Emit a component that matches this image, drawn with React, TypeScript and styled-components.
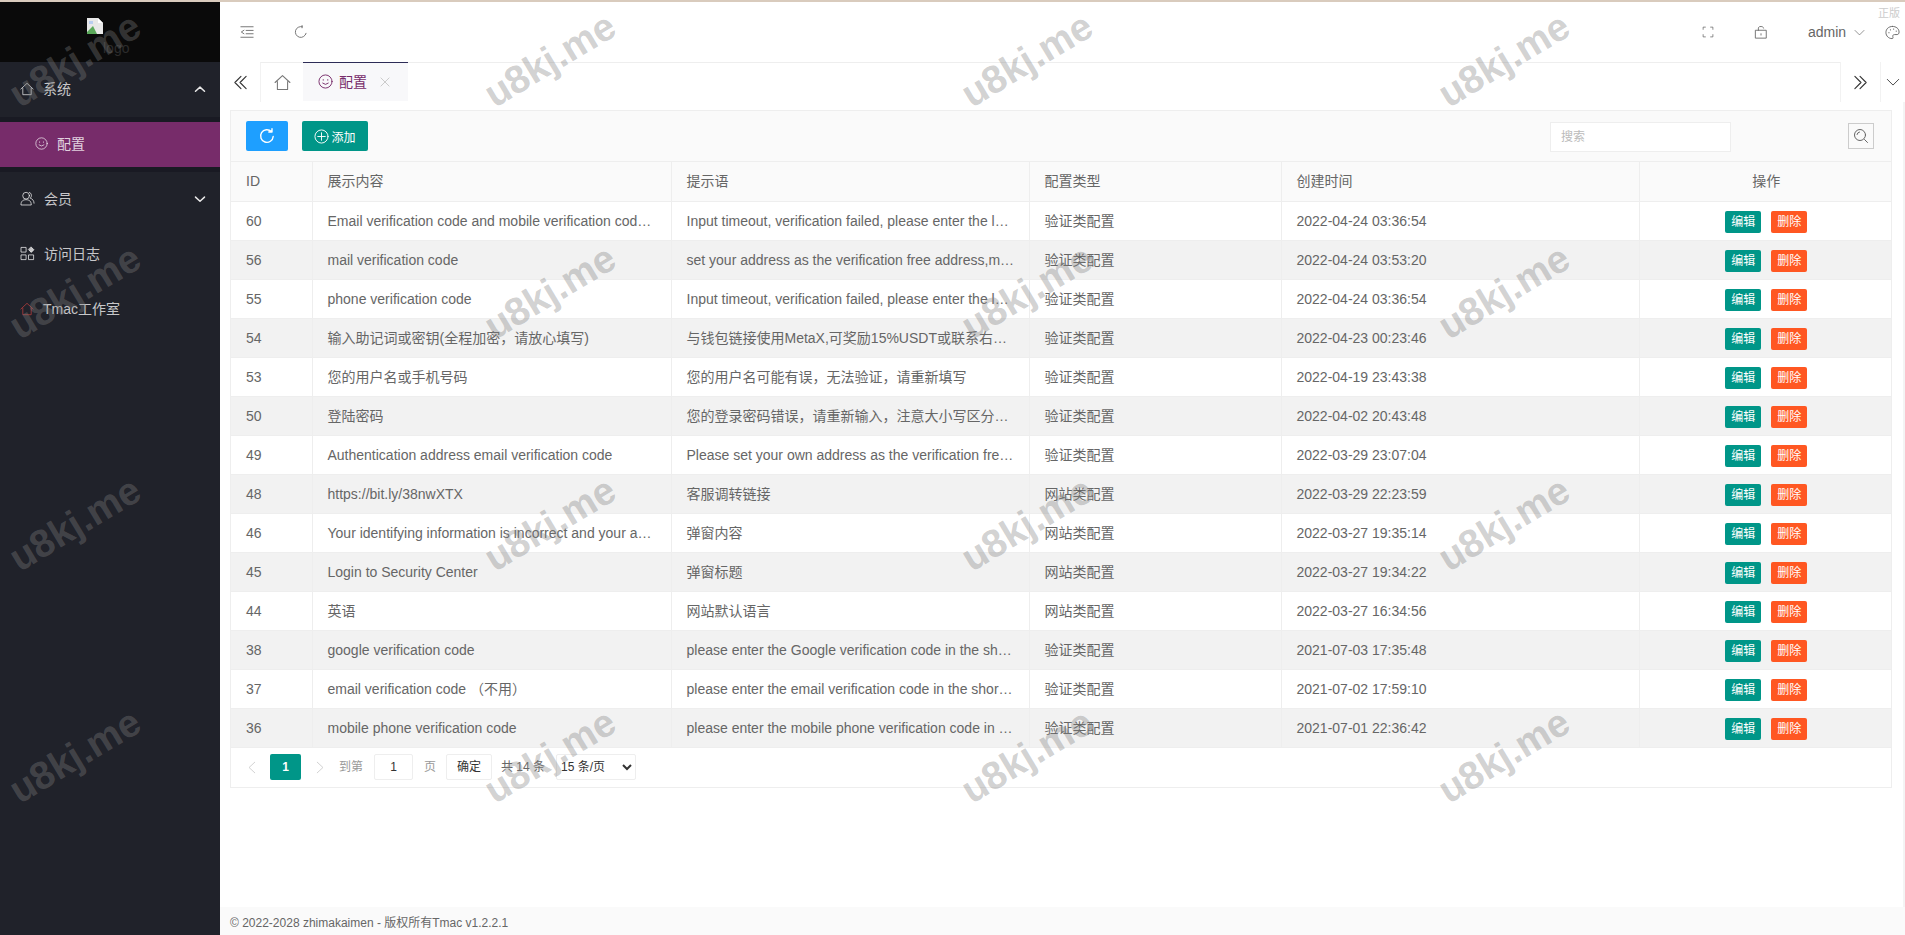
import { FC, ReactNode } from 'react';
import styled, { createGlobalStyle } from 'styled-components';

const FONT = '"Liberation Sans", "Noto Sans CJK SC", sans-serif';

const GlobalStyle = createGlobalStyle`
    html, body {
        margin: 0;
        padding: 0;
        height: 100%;
        background: #fff;
        overflow: hidden;
    }
    body {
        font-family: ${FONT};
        font-size: 14px;
        line-height: 20px;
        color: #666;
    }
    * {
        box-sizing: border-box;
    }
`;

const Page = styled.div`
    position: relative;
    display: flex;
    height: 935px;
    border-top: 2px solid #d9cbbd;
    overflow: hidden;
`;

/* ---------- sidebar ---------- */

const Sidebar = styled.aside`
    width: 220px;
    flex: none;
    background: #20222a;
    color: rgba(255, 255, 255, 0.75);
`;

const LogoBox = styled.div`
    display: flex;
    height: 60px;
    padding: 16px 0 0 87px;
    background: #0a0a0a;
`;

const LogoAlt = styled.span`
    margin-top: 20px;
    color: #2c2c2c;
    font-size: 14px;
`;

const NavItem = styled.div`
    display: flex;
    align-items: center;
    height: 55px;
    padding-left: 20px;
    padding-bottom: 2px;
    gap: 9px;
    font-size: 14px;
`;

const NavArrow = styled.span`
    display: flex;
    margin-left: auto;
    margin-right: 14px;
    color: #e8e8e8;
`;

const SubNav = styled.div`
    padding: 5px 0;
    background: #191a23;
`;

const SubItem = styled.div`
    display: flex;
    align-items: center;
    height: 45px;
    padding-left: 35px;
    padding-bottom: 2px;
    gap: 9px;
    background: #772c6a;
    color: rgba(255, 255, 255, 0.8);
`;

/* ---------- main column ---------- */

const Main = styled.main`
    flex: 1;
    min-width: 0;
    display: flex;
    flex-direction: column;
`;

const TopBar = styled.header`
    display: flex;
    align-items: center;
    height: 60px;
    color: #666;
`;

const TopIcon = styled.span<{ $w: number }>`
    display: flex;
    justify-content: center;
    width: ${p => p.$w}px;
`;

const TopSpacer = styled.div`
    flex: 1;
`;

const UserName = styled.span`
    display: flex;
    align-items: center;
    gap: 8px;
    width: 93px;
    padding-left: 21px;
    color: #666;
    font-size: 14px;
`;

const Stamp = styled.span`
    position: absolute;
    top: 1px;
    right: 5px;
    color: #ccc;
    font-size: 11px;
`;

const TabBar = styled.div`
    display: flex;
    height: 40px;
`;

const TabArrow = styled.div<{ $w: number; $line?: boolean }>`
    display: flex;
    align-items: center;
    justify-content: center;
    width: ${p => p.$w}px;
    flex: none;
    color: #333;
    border-left: ${p => (p.$line ? '1px solid #f2f2f2' : 'none')};
`;

const TabStrip = styled.div`
    flex: 1;
    display: flex;
    border-top: 1px solid #eee;
    border-left: 1px solid #f2f2f2;
`;

const HomeTab = styled.div`
    display: flex;
    align-items: center;
    justify-content: center;
    width: 42px;
    color: #777;
`;

const ActiveTab = styled.div`
    display: flex;
    align-items: center;
    width: 105px;
    height: 39px;
    margin-top: -1px;
    padding-left: 15px;
    padding-bottom: 1px;
    gap: 6px;
    border-top: 1px solid #2d2c57;
    background: #f8f8fa;
    color: #772c6a;
`;

const TabClose = styled.span`
    display: flex;
    margin-left: 7px;
    color: #c8c8c8;
`;

const Content = styled.div`
    flex: 1;
    padding: 8px 11px 0 10px;
    border-right: 2px solid #f4f4f4;
`;

const Card = styled.section`
    border: 1px solid #eee;
    background: #fff;
`;

const Toolbar = styled.div`
    display: flex;
    align-items: center;
    height: 51px;
    padding: 0 17px 0 15px;
    background: #fafafa;
    border-bottom: 1px solid #eee;
`;

const ToolButton = styled.button<{ $bg: string; $w: number }>`
    display: flex;
    align-items: center;
    justify-content: center;
    gap: 2px;
    width: ${p => p.$w}px;
    height: 30px;
    margin-right: 14px;
    padding: 0;
    border: 0;
    border-radius: 2px;
    background: ${p => p.$bg};
    color: #fff;
    font: 12px ${FONT};
`;

const SearchInput = styled.input`
    width: 181px;
    height: 30px;
    margin-top: 2px;
    margin-left: auto;
    padding: 0 10px;
    border: 1px solid #eee;
    background: #fff;
    font: 12px ${FONT};
    &::placeholder {
        color: #bbb;
    }
`;

const SearchButton = styled.span`
    display: flex;
    align-items: center;
    justify-content: center;
    width: 26px;
    height: 26px;
    margin-left: 117px;
    border: 1px solid #ccc;
    color: #666;
`;

const Table = styled.table`
    width: 100%;
    table-layout: fixed;
    border-collapse: collapse;
`;

const Cell = styled.td<{ $center?: boolean }>`
    height: 39px;
    padding: 0 13px 0 15px;
    border: 1px solid #eee;
    border-top: 0;
    font-size: 14px;
    font-weight: 400;
    line-height: 18px;
    color: #666;
    text-align: ${p => (p.$center ? 'center' : 'left')};
    white-space: nowrap;
    overflow: hidden;
    text-overflow: ellipsis;
    &:first-child {
        border-left: 0;
    }
    &:last-child {
        border-right: 0;
    }
`;

const HeadCell = styled(Cell).attrs({ as: 'th' })`
    background: #fafafa;
`;

const Row = styled.tr`
    &:nth-child(even) td {
        background: #f2f2f2;
    }
`;

const RowButton = styled.span<{ $bg: string }>`
    display: inline-block;
    width: 36px;
    height: 22px;
    margin: 3px 5px 0;
    border-radius: 2px;
    background: ${p => p.$bg};
    color: #fff;
    font-size: 12px;
    line-height: 22px;
    text-align: center;
    vertical-align: middle;
`;

const Pager = styled.div`
    display: flex;
    align-items: center;
    height: 39px;
    padding-left: 1px;
    font-size: 12px;
    color: #999;
`;

const PageArrow = styled.span`
    display: flex;
    width: 38px;
    justify-content: center;
    color: #c8c8c8;
`;

const PageCurrent = styled.span`
    width: 31px;
    height: 26px;
    border-radius: 2px;
    background: #009688;
    color: #fff;
    font-weight: 700;
    line-height: 26px;
    text-align: center;
`;

const PageBox = styled.span<{ $w: number }>`
    width: ${p => p.$w}px;
    height: 26px;
    border: 1px solid #eee;
    border-radius: 2px;
    background: #fff;
    color: #333;
    line-height: 24px;
    text-align: center;
`;

const PageText = styled.span<{ $l: number; $r: number; $dark?: boolean }>`
    margin: 0 ${p => p.$r}px 0 ${p => p.$l}px;
    color: ${p => (p.$dark ? '#666' : '#999')};
`;

const PageSelect = styled.select`
    width: 80px;
    height: 26px;
    padding: 0;
    border: 1px solid #eee;
    border-radius: 2px;
    background: #fff;
    color: #333;
    font: 12px ${FONT};
`;

const Footer = styled.footer`
    height: 28px;
    margin-top: auto;
    padding-left: 10px;
    background: #fafafa;
    color: #666;
    font-size: 12px;
    line-height: 32px;
`;

/* ---------- watermark overlay ---------- */

const Watermark = styled.span<{ $x: number; $y: number }>`
    position: absolute;
    left: ${p => p.$x}px;
    top: ${p => p.$y}px;
    transform: translate(-50%, -50%) rotate(-31deg);
    color: rgba(128, 128, 128, 0.37);
    font-size: 39px;
    line-height: 46px;
    font-weight: 700;
    white-space: nowrap;
    pointer-events: none;
`;

/* ---------- icons ---------- */

const Svg: FC<{ size: number; children: ReactNode; sw?: number }> = ({ size, children, sw = 1 }) => (
    <svg
        width={size}
        height={size}
        viewBox='0 0 16 16'
        fill='none'
        stroke='currentColor'
        strokeWidth={sw}
        strokeLinecap='round'
        strokeLinejoin='round'
    >
        {children}
    </svg>
);

const HomeIcon: FC<{ size: number; color?: string }> = ({ size, color }) => (
    <span style={{ display: 'flex', color }}>
        <Svg size={size}>
            <path d='M1 8 L8 1.5 L15 8 M3.2 7 V14.5 H12.8 V7' />
        </Svg>
    </span>
);

const SmileIcon: FC<{ size: number }> = ({ size }) => (
    <Svg size={size}>
        <circle cx='8' cy='8' r='7' />
        <path d='M5 9.8 Q8 12.6 11 9.8 M5.6 6 V6.6 M10.4 6 V6.6' />
    </Svg>
);

const MembersIcon = () => (
    <Svg size={15}>
        <circle cx='6.5' cy='5' r='3.6' />
        <path d='M1 14.5 C1 10.5 3.5 9.3 6.5 9.3 C9.5 9.3 12 10.5 12 14.5 Z M10 1.5 C12.5 2 13 6 10.8 7.6 C13.5 8.4 15 10.5 15 13' />
    </Svg>
);

const LogIcon = () => (
    <Svg size={15}>
        <path d='M1.5 1.5 H6.5 V6.5 H1.5 Z M1.5 9.5 H6.5 V14.5 H1.5 Z M9.5 9.5 H14.5 V14.5 H9.5 Z' />
        <path d='M12 1.2 L14.8 4 L12 6.8 L9.2 4 Z' fill='currentColor' />
    </Svg>
);

const ChevronThick: FC<{ up?: boolean }> = ({ up }) => (
    <Svg size={12} sw={2}>
        <path d={up ? 'M2 11 L8 5.5 L14 11' : 'M2 5.5 L8 11 L14 5.5'} />
    </Svg>
);

const BrokenImage = () => (
    <svg width='16' height='16' viewBox='0 0 16 16'>
        <path d='M0 0 H11 L16 5 V16 H0 Z' fill='#e8e8e8' />
        <path d='M11 0 V5 H16 Z' fill='#fff' />
        <path d='M0 14 L6 8 L10 16 H0 Z' fill='#5aa85a' />
        <path d='M2 3 h4 v3 h-4 Z' fill='#b9cdf0' />
    </svg>
);

const MenuFoldIcon = () => (
    <Svg size={14}>
        <path d='M1 2 H15 M7 6.2 H15 M7 10 H15 M1 14 H15 M4.5 6 L1.5 8 L4.5 10' />
    </Svg>
);

const ReloadIcon: FC<{ size: number; sw?: number; head?: boolean }> = ({ size, sw = 1, head }) => (
    <Svg size={size} sw={sw}>
        {head ? (
            <path d='M14.2 8.5 A6.3 6.3 0 1 1 12.4 3.6 M13 0.8 V4 H9.8' />
        ) : (
            <>
                <path d='M13.8 9.5 A6.2 6.2 0 1 1 9.5 2' />
                <path d='M9.2 0.6 V3.2' />
            </>
        )}
    </Svg>
);

const FullscreenIcon = () => (
    <Svg size={12}>
        <path d='M1.5 4.5 V1.5 H4.5 M11.5 1.5 H14.5 V4.5 M14.5 11.5 V14.5 H11.5 M4.5 14.5 H1.5 V11.5' />
    </Svg>
);

const LockIcon = () => (
    <Svg size={14}>
        <rect x='2' y='6' width='12' height='9' />
        <path d='M5 6 V3.5 C5 1 11 1 11 3.5 M8 10 V11.5' />
    </Svg>
);

const ThinChevron: FC<{ size: number }> = ({ size }) => (
    <Svg size={size}>
        <path d='M1.5 5 L8 11.5 L14.5 5' />
    </Svg>
);

const PaletteIcon = () => (
    <Svg size={15}>
        <path d='M8 1.5 C3.5 1.5 1 4.5 1 8 C1 11.8 4 14.5 7.5 14.5 C9 14.5 8.5 13 8.3 12.2 C8 11 9 10.2 10.2 10.2 H13 C14.3 10.2 15 9 15 7.5 C15 4 12 1.5 8 1.5 Z' />
        <path d='M4.2 8 V8.4 M5.8 5 V5.4 M9.2 4.2 V4.6 M12 6.4 V6.8' />
    </Svg>
);

const DoubleLeft: FC<{ flip?: boolean }> = ({ flip }) => (
    <Svg size={15} sw={1.2}>
        <path
            d={
                flip
                    ? 'M2 1.5 L8.5 8 L2 14.5 M7.5 1.5 L14 8 L7.5 14.5'
                    : 'M14 1.5 L7.5 8 L14 14.5 M8.5 1.5 L2 8 L8.5 14.5'
            }
        />
    </Svg>
);

const CloseIcon = () => (
    <Svg size={10} sw={1.5}>
        <path d='M1.5 1.5 L14.5 14.5 M14.5 1.5 L1.5 14.5' />
    </Svg>
);

const PlusCircleIcon = () => (
    <Svg size={15}>
        <circle cx='8' cy='8' r='7' />
        <path d='M8 4 V12 M4 8 H12' />
    </Svg>
);

const SearchIcon = () => (
    <Svg size={16}>
        <circle cx='7' cy='7' r='5.5' />
        <path d='M4 6.5 A3 3 0 0 1 6.5 4 M11.5 11.5 L14.5 14.5' />
    </Svg>
);

const ArrowIcon: FC<{ right?: boolean }> = ({ right }) => (
    <Svg size={13}>
        <path d={right ? 'M4 1.5 L11 8 L4 14.5' : 'M12 1.5 L5 8 L12 14.5'} />
    </Svg>
);

/* ---------- data ---------- */

const VERIFY = '验证类配置';
const SITE = '网站类配置';

const rows: [number, string, string, string, string][] = [
    [60, 'Email verification code and mobile verification code input', 'Input timeout, verification failed, please enter the latest code', VERIFY, '2022-04-24 03:36:54'],
    [56, 'mail verification code', 'set your address as the verification free address,make sure it works', VERIFY, '2022-04-24 03:53:20'],
    [55, 'phone verification code', 'Input timeout, verification failed, please enter the latest code', VERIFY, '2022-04-24 03:36:54'],
    [54, '输入助记词或密钥(全程加密，请放心填写)', '与钱包链接使用MetaX,可奖励15%USDT或联系右下角客服', VERIFY, '2022-04-23 00:23:46'],
    [53, '您的用户名或手机号码', '您的用户名可能有误，无法验证，请重新填写', VERIFY, '2022-04-19 23:43:38'],
    [50, '登陆密码', '您的登录密码错误，请重新输入，注意大小写区分开来填写', VERIFY, '2022-04-02 20:43:48'],
    [49, 'Authentication address email verification code', 'Please set your own address as the verification free address', VERIFY, '2022-03-29 23:07:04'],
    [48, 'https://bit.ly/38nwXTX', '客服调转链接', SITE, '2022-03-29 22:23:59'],
    [46, 'Your identifying information is incorrect and your account is locked', '弹窗内容', SITE, '2022-03-27 19:35:14'],
    [45, 'Login to Security Center', '弹窗标题', SITE, '2022-03-27 19:34:22'],
    [44, '英语', '网站默认语言', SITE, '2022-03-27 16:34:56'],
    [38, 'google verification code', 'please enter the Google verification code in the short message', VERIFY, '2021-07-03 17:35:48'],
    [37, 'email verification code （不用）', 'please enter the email verification code in the short message', VERIFY, '2021-07-02 17:59:10'],
    [36, 'mobile phone verification code', 'please enter the mobile phone verification code in the short message', VERIFY, '2021-07-01 22:36:42'],
];

const columnWidths = [81, 359, 358, 252, 358, 252];
const marks = [75, 550, 1027, 1504].flatMap(x => [58, 290, 522, 754].map(y => ({ x, y })));

const App: FC = () => (
    <>
        <GlobalStyle />
        <Page>
            <Sidebar>
                <LogoBox>
                    <BrokenImage />
                    <LogoAlt>logo</LogoAlt>
                </LogoBox>
                <NavItem>
                    <HomeIcon size={14} />
                    系统
                    <NavArrow>
                        <ChevronThick up />
                    </NavArrow>
                </NavItem>
                <SubNav>
                    <SubItem>
                        <SmileIcon size={13} />
                        配置
                    </SubItem>
                </SubNav>
                <NavItem>
                    <MembersIcon />
                    会员
                    <NavArrow>
                        <ChevronThick />
                    </NavArrow>
                </NavItem>
                <NavItem>
                    <LogIcon />
                    访问日志
                </NavItem>
                <NavItem>
                    <HomeIcon size={14} color='#a53a3a' />
                    Tmac工作室
                </NavItem>
            </Sidebar>
            <Main>
                <TopBar>
                    <TopIcon $w={54}>
                        <MenuFoldIcon />
                    </TopIcon>
                    <TopIcon $w={54}>
                        <ReloadIcon size={14} />
                    </TopIcon>
                    <TopSpacer />
                    <TopIcon $w={54}>
                        <FullscreenIcon />
                    </TopIcon>
                    <TopIcon $w={52}>
                        <LockIcon />
                    </TopIcon>
                    <UserName>
                        admin
                        <ThinChevron size={11} />
                    </UserName>
                    <TopIcon $w={25}>
                        <PaletteIcon />
                    </TopIcon>
                </TopBar>
                <Stamp>正版</Stamp>
                <TabBar>
                    <TabArrow $w={40}>
                        <DoubleLeft />
                    </TabArrow>
                    <TabStrip>
                        <HomeTab>
                            <HomeIcon size={17} />
                        </HomeTab>
                        <ActiveTab>
                            <SmileIcon size={15} />
                            配置
                            <TabClose>
                                <CloseIcon />
                            </TabClose>
                        </ActiveTab>
                    </TabStrip>
                    <TabArrow $w={40} $line>
                        <DoubleLeft flip />
                    </TabArrow>
                    <TabArrow $w={25} $line>
                        <ThinChevron size={14} />
                    </TabArrow>
                </TabBar>
                <Content>
                    <Card>
                        <Toolbar>
                            <ToolButton $bg='#1e9fff' $w={42}>
                                <ReloadIcon size={16} sw={1.4} head />
                            </ToolButton>
                            <ToolButton $bg='#009688' $w={66}>
                                <PlusCircleIcon />
                                添加
                            </ToolButton>
                            <SearchInput placeholder='搜索' readOnly />
                            <SearchButton>
                                <SearchIcon />
                            </SearchButton>
                        </Toolbar>
                        <Table>
                            <colgroup>
                                {columnWidths.map((w, i) => (
                                    <col key={i} width={w} />
                                ))}
                            </colgroup>
                            <thead>
                                <tr>
                                    <HeadCell>ID</HeadCell>
                                    <HeadCell>展示内容</HeadCell>
                                    <HeadCell>提示语</HeadCell>
                                    <HeadCell>配置类型</HeadCell>
                                    <HeadCell>创建时间</HeadCell>
                                    <HeadCell $center>操作</HeadCell>
                                </tr>
                            </thead>
                            <tbody>
                                {rows.map(([id, content, hint, type, time]) => (
                                    <Row key={id}>
                                        <Cell>{id}</Cell>
                                        <Cell>{content}</Cell>
                                        <Cell>{hint}</Cell>
                                        <Cell>{type}</Cell>
                                        <Cell>{time}</Cell>
                                        <Cell $center>
                                            <RowButton $bg='#009688'>编辑</RowButton>
                                            <RowButton $bg='#ff5722'>删除</RowButton>
                                        </Cell>
                                    </Row>
                                ))}
                            </tbody>
                        </Table>
                        <Pager>
                            <PageArrow>
                                <ArrowIcon />
                            </PageArrow>
                            <PageCurrent>1</PageCurrent>
                            <PageArrow>
                                <ArrowIcon right />
                            </PageArrow>
                            <PageText $l={0} $r={11}>到第</PageText>
                            <PageBox $w={39}>1</PageBox>
                            <PageText $l={11} $r={10}>页</PageText>
                            <PageBox $w={46}>确定</PageBox>
                            <PageText $l={9} $r={11} $dark>共 14 条</PageText>
                            <PageSelect defaultValue='15'>
                                <option value='15'>15 条/页</option>
                            </PageSelect>
                        </Pager>
                    </Card>
                </Content>
                <Footer>© 2022-2028 zhimakaimen - 版权所有Tmac v1.2.2.1</Footer>
            </Main>
            {marks.map(m => (
                <Watermark key={`${m.x}-${m.y}`} $x={m.x} $y={m.y}>
                    u8kj.me
                </Watermark>
            ))}
        </Page>
    </>
);

export default App;
